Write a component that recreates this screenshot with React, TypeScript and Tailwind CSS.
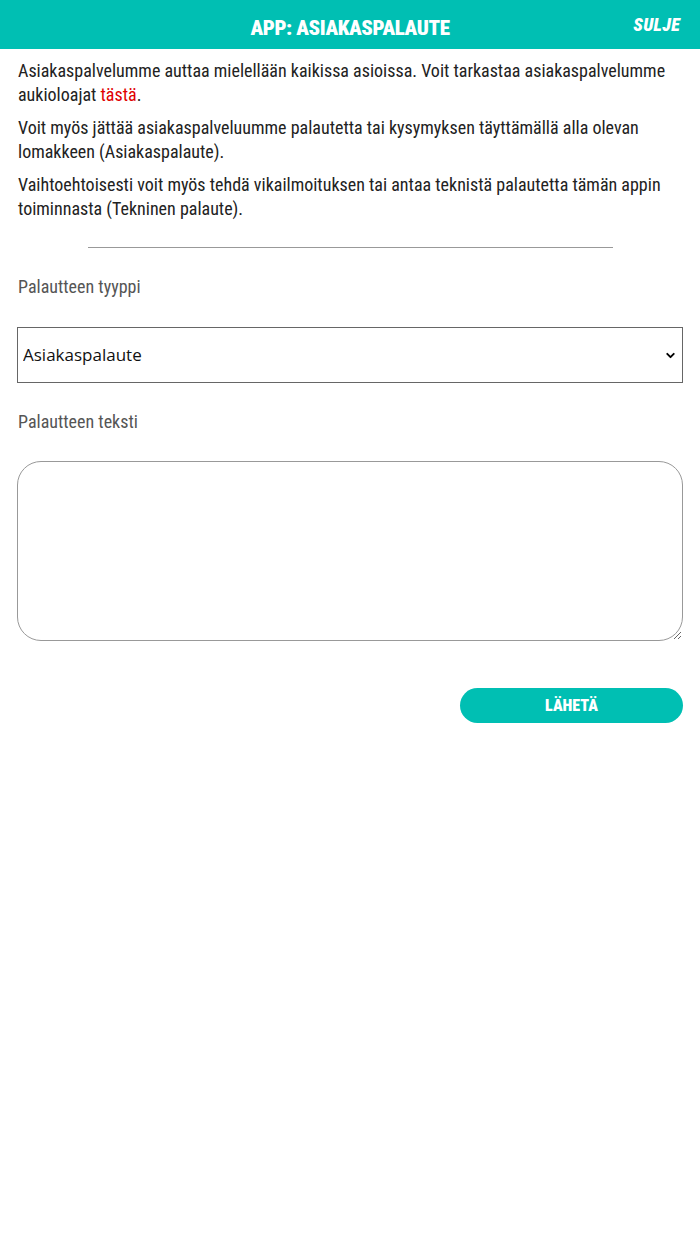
import { ChevronDown } from 'lucide-react';

const intro = [
  <>
    Asiakaspalvelumme auttaa mielellään kaikissa asioissa. Voit tarkastaa asiakaspalvelumme aukioloajat{' '}
    <a href="#" className="text-[#e00000]">tästä</a>.
  </>,
  <>Voit myös jättää asiakaspalveluumme palautetta tai kysymyksen täyttämällä alla olevan lomakkeen (Asiakaspalaute).</>,
  <>Vaihtoehtoisesti voit myös tehdä vikailmoituksen tai antaa teknistä palautetta tämän appin toiminnasta (Tekninen palaute).</>,
];

const condensed = "font-['Roboto_Condensed','DejaVu_Sans_Condensed',Roboto,sans-serif]";

export default function App() {
  return (
    <div className={`min-h-[1244px] bg-white ${condensed}`}>
      <header className="relative flex h-[49px] items-center justify-center bg-[#00bfb3] pt-[7px]">
        <h1 className="text-[21px] font-black uppercase leading-none tracking-[-0.4px] text-white">App: Asiakaspalaute</h1>
        <button className="absolute right-[20px] top-[16px] text-[18px] font-black italic leading-none tracking-[0.3px] text-white">
          SULJE
        </button>
      </header>

      <main className="px-[18px] pt-[10px]">
        <div className="space-y-[10px] text-[18px] leading-[23.5px] text-[#222]">
          {intro.map((p, i) => (
            <p key={i}>{p}</p>
          ))}
        </div>

        <hr className="mx-auto mt-[27px] w-[525px] border-t border-[#999]" />

        <form className="mt-[27px]" onSubmit={(e) => e.preventDefault()}>
          <label className="block text-[18px] leading-[23px] text-[#555]">Palautteen tyyppi</label>
          <div className="relative -mx-px mt-[29px]">
            <select className="h-[56px] w-full appearance-none border border-[#666] bg-white pl-[5px] font-['Open_Sans',sans-serif] text-[17px] font-normal text-[#111] outline-none">
              <option>Asiakaspalaute</option>
              <option>Tekninen palaute</option>
            </select>
            <ChevronDown className="pointer-events-none absolute right-[6px] top-[22px] h-[13px] w-[13px] text-black" strokeWidth={3.5} />
          </div>

          <label className="mt-[27px] block text-[18px] leading-[23px] text-[#555]">Palautteen teksti</label>
          <textarea className="-mx-px mt-[28px] block h-[180px] w-[calc(100%+2px)] rounded-[24px] border border-[#999] p-3 text-[18px] outline-none" />

          <div className="mt-[47px] flex justify-end">
            <button className="-mr-px h-[35px] w-[223px] rounded-full bg-[#00bfb3] text-[16px] font-black text-white">
              LÄHETÄ
            </button>
          </div>
        </form>
      </main>
    </div>
  );
}
